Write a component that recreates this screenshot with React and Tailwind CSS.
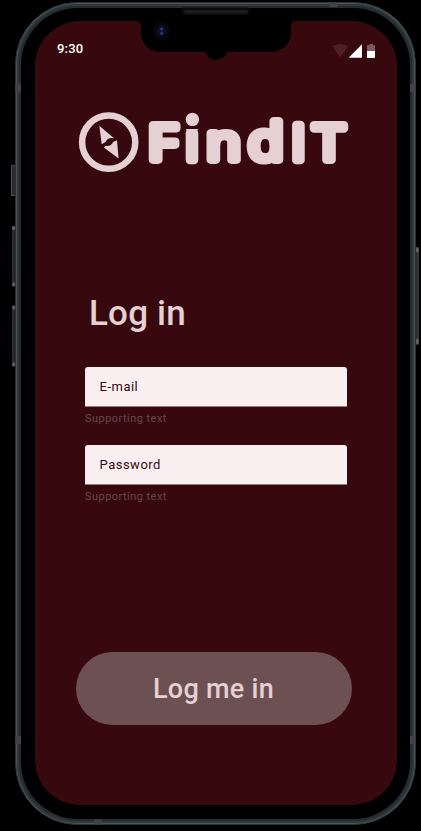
function Logo() {
  return (
    <svg className="mt-[35px] ml-[43px] block h-[100px] w-[276px] shrink-0 overflow-visible" viewBox="78 94 276 100" fill="#e5d1d4" aria-label="FindIT">
      <clipPath id="stem">
        <rect x="180" y="129" width="24" height="40" />
      </clipPath>
      <circle cx="108.7" cy="142.2" r="26.6" fill="none" stroke="#e5d1d4" strokeWidth="6.5" />
      <path d="M99.3 125.8 L114.3 138.4 C110.5 137.4 107 138.2 105.6 142 L101.7 144.3 Z" />
      <path d="M118.6 158.5 L103.8 147.6 L105.8 145.7 C109 146.4 111.8 145.5 113 142 L117 140.3 Z" />
      <g
        className="font-['Open_Sans',sans-serif] font-normal"
        fontSize="49.5"
        stroke="#e5d1d4"
        strokeWidth="8.5"
        strokeLinejoin="round"
      >
        <text vectorEffect="non-scaling-stroke" transform="translate(147.7 160.2) scale(1.15 1)">F</text>
        <g clipPath="url(#stem)">
          <text transform="translate(185.8 160.2)">i</text>
        </g>
        <text vectorEffect="non-scaling-stroke" transform="translate(206.3 160.2) scale(1.14 1)">n</text>
        <text vectorEffect="non-scaling-stroke" transform="translate(248 160.2) scale(1.18 1.04)">d</text>
        <text transform="translate(291.4 160.2)">I</text>
        <text vectorEffect="non-scaling-stroke" transform="translate(313.7 160.2) scale(1.12 1)">T</text>
      </g>
      <circle cx="192.4" cy="119.4" r="6.7" />
    </svg>
  );
}

function StatusBar() {
  return (
    <div className="flex h-[38px] items-end justify-between px-[22px]">
      <span className="h-[19px] text-[13px] leading-[17px] font-medium tracking-[0.2px] text-white">9:30</span>
      <svg className="h-[16px] w-[43px]" viewBox="332 41 43 16">
        <path d="M332.4 44.6 Q340.2 39.4 348 44.6 L340.2 55.3 Z" fill="#4d2027" />
        <path d="M362 42.3 V55.7 H348.7 Z" fill="#fff" />
        <path d="M367 43.3 H369.5 V42 H373 V43.3 H375 V49 H367 Z" fill="#7b5b60" />
        <path d="M367 49 H375 V55.2 Q375 56 374.2 56 H367.8 Q367 56 367 55.2 Z" fill="#fff" />
      </svg>
    </div>
  );
}

function Field({ label, type }) {
  return (
    <label className="flex flex-col gap-1">
      <div className="flex h-[40px] items-center rounded-t-[3px] border-b border-[#90787b] bg-[#f9eff0] pl-[14.5px]">
        <input
          type={type}
          placeholder={label}
          className="w-full bg-transparent text-[13px] leading-[20px] tracking-[0.5px] outline-none placeholder:text-[#37090f]"
        />
      </div>
      <p className="text-[11px] leading-[16px] tracking-[0.46px] text-[#69454a]">Supporting text</p>
    </label>
  );
}

function DeviceDetails() {
  return (
    <svg className="pointer-events-none absolute inset-0 overflow-visible" width="401" height="823" viewBox="15 2 401 823">
      <path d="M135 20 V21 C139 21 141 23 141 27 V32 C141 43 149 52 161 52 H205.5 C207 57 211 60 216 60 C221 60 225 57 227 52 H271 C283 52 291 43 291 32 V27 C291 23 293 21 297 21 V20 Z" fill="#000" />
      <rect x="181.5" y="7.5" width="68" height="7.5" rx="2" fill="#090909" />
      <rect x="184" y="10" width="64" height="3.5" rx="1.5" fill="#1b1b1b" />
      <circle cx="161.5" cy="31" r="8.7" fill="#08080c" />
      <circle cx="161.5" cy="31" r="4.7" fill="#0d0e30" />
      <circle cx="161.5" cy="29" r="1.5" fill="#263a79" />
      <circle cx="161.5" cy="33.3" r="1.5" fill="#22337a" />
      <g fill="#3e434b">
        <rect x="15.5" y="84" width="5.5" height="8" />
        <rect x="410" y="84" width="5.5" height="8" />
        <rect x="15.5" y="736" width="5.5" height="8" />
        <rect x="410" y="736" width="5.5" height="8" />
        <rect x="329" y="2.5" width="8" height="4.5" />
        <rect x="94" y="819.5" width="8" height="5" />
      </g>
      <path d="M15 165.5 H11.5 V195.5 H15" fill="#272c2f" stroke="#4b4f52" />
      <g fill="#1c2022">
        <rect x="12" y="226" width="3" height="60" />
        <rect x="12" y="306" width="3" height="60" />
        <rect x="416" y="247" width="3" height="98" fill="#292d2f" />
      </g>
      <path d="M13 227 V285 M13 307 V365 M418 249 V343" stroke="#393e40" />
      <g fill="#606365">
        <rect x="12.3" y="226" width="2.7" height="4" rx="1" />
        <rect x="12.3" y="282.5" width="2.7" height="4" rx="1" />
        <rect x="12.3" y="305.5" width="2.7" height="4" rx="1" />
        <rect x="12.3" y="362.5" width="2.7" height="4" rx="1" />
        <rect x="416" y="247.5" width="2.7" height="5" rx="1" />
        <rect x="416" y="339" width="2.7" height="5" rx="1" />
      </g>
    </svg>
  );
}

export default function App() {
  return (
    <div className="flex h-[831px] w-[421px] overflow-hidden bg-black pt-[2px] pl-[15px] font-[Roboto,sans-serif]">
      <div className="relative h-[823px] w-[401px]">
        <div className="h-full rounded-[62px] border border-[#2b3235] bg-[#4d5558] p-px">
          <div className="h-full rounded-[60px] border-2 border-[#30383b] bg-[#252c2f] p-[2px]">
            <div className="h-full rounded-[57px] bg-black pt-[13px] pl-[14px]">
              <main className="flex h-[784px] w-[362px] flex-col rounded-[45px] bg-[#37090f]">
                <StatusBar />
                <Logo />
                <form className="flex flex-1 flex-col justify-between pt-[99px] pb-[80px]" onSubmit={(e) => e.preventDefault()}>
                  <div className="flex flex-col gap-8 px-[50px]">
                    <h1 className="pl-1 text-[35px] leading-[42px] font-medium tracking-[0.2px] text-[#e5d1d4]">Log in</h1>
                    <div className="flex flex-col gap-[18px]">
                      <Field label="E-mail" type="email" />
                      <Field label="Password" type="password" />
                    </div>
                  </div>
                  <button className="ml-[41px] h-[73px] w-[276px] rounded-full bg-[#6d5052] pr-px text-[27px] leading-[32px] font-medium tracking-[0.3px] text-[#e5d1d4]">
                    Log me in
                  </button>
                </form>
              </main>
            </div>
          </div>
        </div>
        <DeviceDetails />
      </div>
    </div>
  );
}
